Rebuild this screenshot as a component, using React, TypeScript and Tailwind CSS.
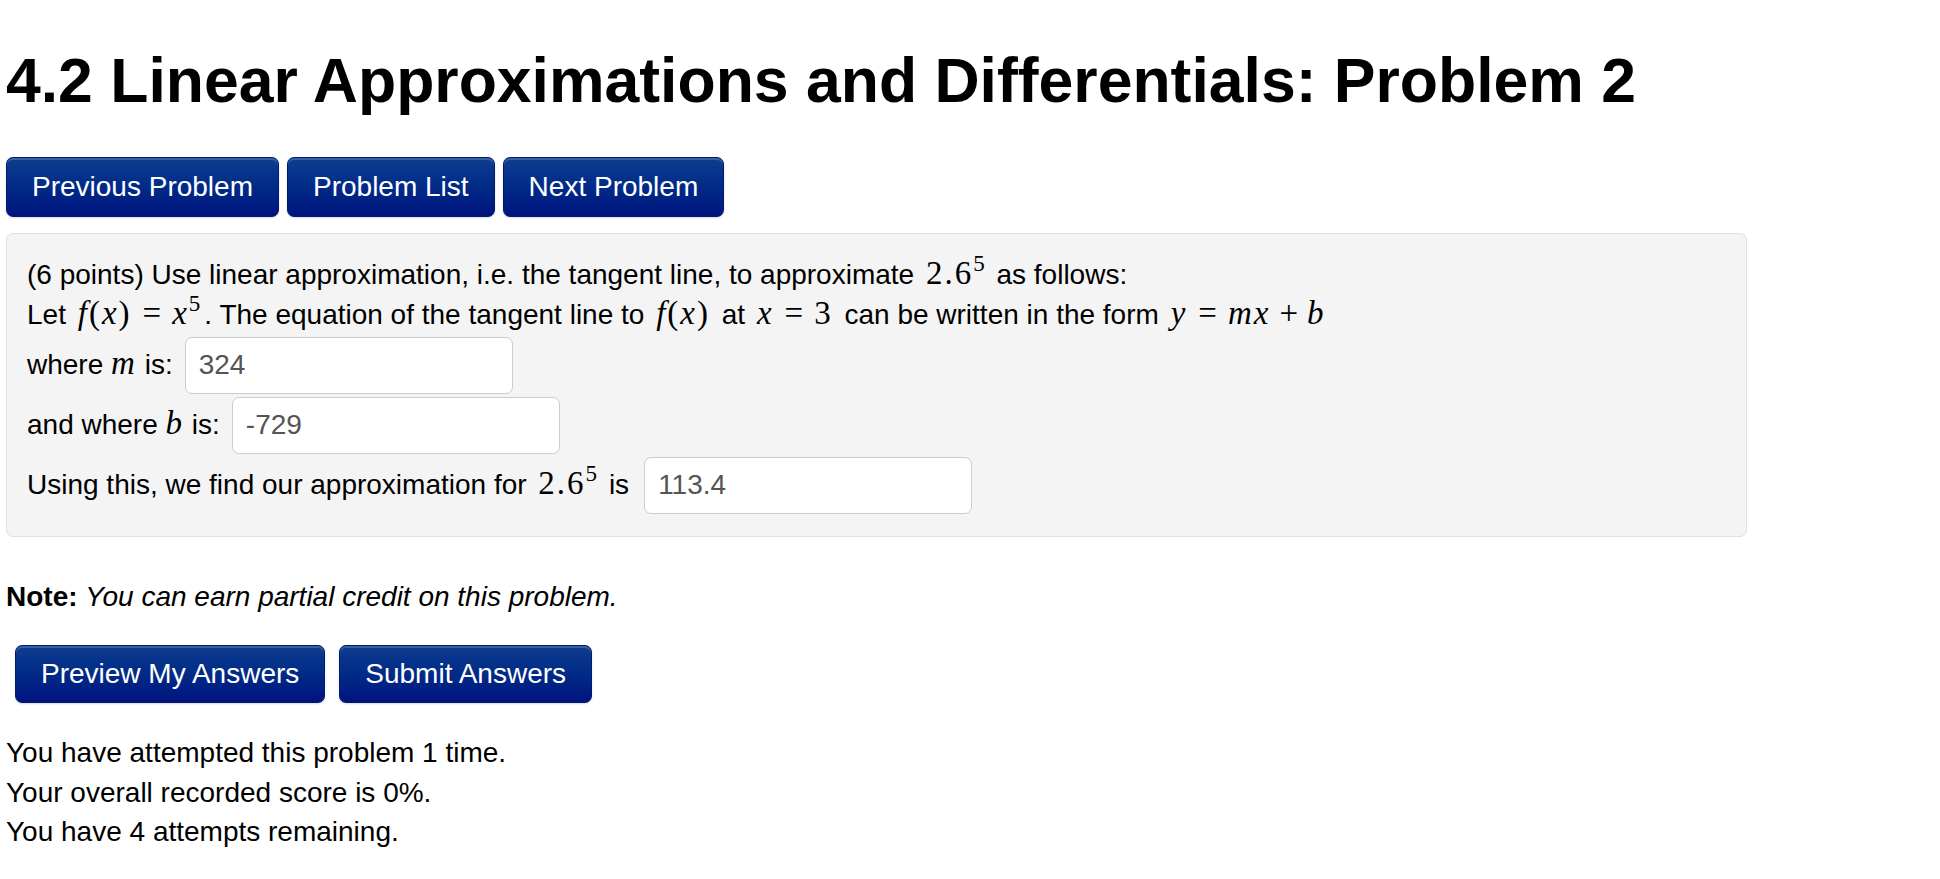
import React from "react"

const Btn = ({ children, tall = true }: { children: React.ReactNode; tall?: boolean }) => (
  <button
    className={
      tall
        ? "rounded-[7px] border border-[#001a6e] bg-gradient-to-b from-[#0e3d8f] to-[#00127f] px-[25px] py-[9px] text-[28px] leading-[40px] text-white shadow-[inset_0_2px_0_rgba(255,255,255,0.18),0_1px_2px_rgba(0,0,0,0.15)]"
        : "rounded-[7px] border border-[#001a6e] bg-gradient-to-b from-[#0e3d8f] to-[#00127f] px-[25px] py-[8px] text-[28px] leading-[40px] text-white shadow-[inset_0_2px_0_rgba(255,255,255,0.18),0_1px_2px_rgba(0,0,0,0.15)]"
    }
  >
    {children}
  </button>
)

// math bits, roughly the MathJax look
const Math = ({ children }: { children: React.ReactNode }) => <span className="mx-[4px]">{children}</span>

const M = ({ children }: { children: React.ReactNode }) => (
  <span className="font-['Liberation_Serif',serif] text-[33px] leading-none italic tracking-[2px]">{children}</span>
)

const N = ({ children }: { children: React.ReactNode }) => (
  <span className="font-['Liberation_Serif',serif] text-[33px] leading-none tracking-[2px]">{children}</span>
)

const Sup = ({ children }: { children: React.ReactNode }) => (
  <sup className="-top-[13px] font-['Liberation_Serif',serif] text-[23px] not-italic tracking-normal">{children}</sup>
)

const Eq = () => (
  <N>
    <span className="mx-[11px] tracking-normal">=</span>
  </N>
)

const Answer = ({ value }: { value: string }) => (
  <input
    readOnly
    value={value}
    className="h-[57px] w-[328px] rounded-[7px] border border-[#cccccc] bg-white px-[13px] text-[28px] text-[#555555] outline-none"
  />
)

export default function App() {
  return (
    <div className="min-h-screen bg-white px-[6px] font-['Liberation_Sans',Arial,sans-serif] text-[28px] leading-[40px] text-black">
      <h1 className="pt-[46px] text-[62.5px] font-bold leading-[68px]">
        4.2 Linear Approximations and Differentials: Problem 2
      </h1>

      <div className="mt-[43px] flex gap-[8px]">
        <Btn>Previous Problem</Btn>
        <Btn>Problem List</Btn>
        <Btn>Next Problem</Btn>
      </div>

      {/* problem body */}
      <div className="mt-[16px] w-[1741px] rounded-[7px] border border-[#e0e0e0] bg-[#f4f4f4] pb-[21px] pl-[20px] pt-[21px]">
        <div>
          (6 points) Use linear approximation, i.e. the tangent line, to approximate{" "}
          <Math>
            <N>
              2.6<Sup>5</Sup>
            </N>
          </Math>{" "}
          as follows:
        </div>
        <div>
          Let{" "}
          <Math>
            <M>f</M>
            <N>(</N>
            <M>x</M>
            <N>)</N>
            <Eq />
            <M>x</M>
            <Sup>5</Sup>
          </Math>
          . The equation of the tangent line to{" "}
          <Math>
            <M>f</M>
            <N>(</N>
            <M>x</M>
            <N>)</N>
          </Math>{" "}
          at{" "}
          <Math>
            <M>x</M>
            <Eq />
            <N>3</N>
          </Math>{" "}
          can be written in the form{" "}
          <Math>
            <M>y</M>
            <Eq />
            <M>mx</M>
            <N>
              <span className="mx-[9px] tracking-normal">+</span>
            </N>
            <M>b</M>
          </Math>
        </div>
        <div className="flex h-[60px] items-center gap-[12px]">
          <span>
            where <M>m</M> is:
          </span>
          <Answer value="324" />
        </div>
        <div className="flex h-[60px] items-center gap-[12px]">
          <span>
            and where <M>b</M> is:
          </span>
          <Answer value="-729" />
        </div>
        <div className="flex h-[60px] items-center gap-[15px]">
          <span>
            Using this, we find our approximation for{" "}
            <Math>
              <N>
                2.6<Sup>5</Sup>
              </N>
            </Math>{" "}
            is
          </span>
          <Answer value="113.4" />
        </div>
      </div>

      <p className="mt-[40px]">
        <b>Note:</b> <i>You can earn partial credit on this problem.</i>
      </p>

      <div className="ml-[9px] mt-[28px] flex gap-[14px]">
        <Btn tall={false}>Preview My Answers</Btn>
        <Btn tall={false}>Submit Answers</Btn>
      </div>

      <div className="mt-[30px] leading-[39.5px]">
        <div>You have attempted this problem 1 time.</div>
        <div>Your overall recorded score is 0%.</div>
        <div>You have 4 attempts remaining.</div>
      </div>
    </div>
  )
}
